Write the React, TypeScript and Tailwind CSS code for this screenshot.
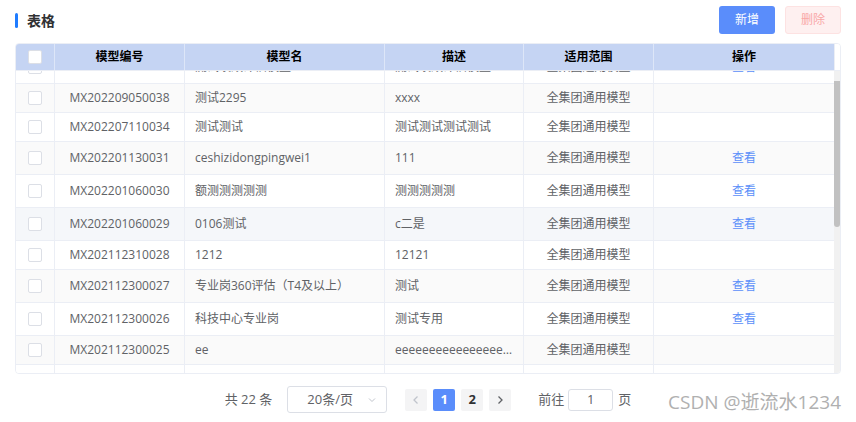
import React from 'react';

type Row = {
  code: string;
  name: string;
  desc: string;
  scope: string;
  view: boolean;
  bg: string;
};

const rows: Row[] = [
  { code: 'MX202212130039', name: '测试绩效评估模型', desc: '测试绩效评估模型', scope: '全集团通用模型', view: true, bg: 'bg-white' },
  { code: 'MX202209050038', name: '测试2295', desc: 'xxxx', scope: '全集团通用模型', view: false, bg: 'bg-[#fafafa]' },
  { code: 'MX202207110034', name: '测试测试', desc: '测试测试测试测试', scope: '全集团通用模型', view: false, bg: 'bg-white' },
  { code: 'MX202201130031', name: 'ceshizidongpingwei1', desc: '111', scope: '全集团通用模型', view: true, bg: 'bg-[#fafafa]' },
  { code: 'MX202201060030', name: '额测测测测测', desc: '测测测测测', scope: '全集团通用模型', view: true, bg: 'bg-white' },
  { code: 'MX202201060029', name: '0106测试', desc: 'c二是', scope: '全集团通用模型', view: true, bg: 'bg-[#f5f7fa]' },
  { code: 'MX202112310028', name: '1212', desc: '12121', scope: '全集团通用模型', view: false, bg: 'bg-white' },
  { code: 'MX202112300027', name: '专业岗360评估（T4及以上）', desc: '测试', scope: '全集团通用模型', view: true, bg: 'bg-[#fafafa]' },
  { code: 'MX202112300026', name: '科技中心专业岗', desc: '测试专用', scope: '全集团通用模型', view: true, bg: 'bg-white' },
  { code: 'MX202112300025', name: 'ee', desc: 'eeeeeeeeeeeeeeeeeeeeeeee', scope: '全集团通用模型', view: false, bg: 'bg-[#fafafa]' },
];

const cols = 'grid grid-cols-[39px_130px_200px_139px_130px_180px]';
const font = { fontFamily: '"Open Sans", "Noto Sans CJK SC", sans-serif' };

function Checkbox() {
  return <span className="block w-[14px] h-[14px] rounded-[2px] border border-[#dcdfe6] bg-white" />;
}

function Cell({ children, align = 'center', last = false }: { children?: React.ReactNode; align?: 'center' | 'left'; last?: boolean }) {
  return (
    <div
      className={`flex items-center overflow-hidden px-[10px] ${align === 'center' ? 'justify-center' : 'justify-start'} ${last ? '' : 'border-r border-[#ebeef5]'}`}
    >
      {children}
    </div>
  );
}

export default function App() {
  return (
    <div className="relative w-[856px] h-[422px] bg-white overflow-hidden text-[12px] text-[#606266]" style={font}>
      {/* toolbar */}
      <div className="flex items-center justify-between pl-[15px] pr-[15px] pt-[6px]">
        <div className="flex items-center gap-[9px]">
          <span className="block w-[3px] h-[15px] rounded-full bg-[#1f7cff]" />
          <span className="text-[14px] font-bold text-[#303133]">表格</span>
        </div>
        <div className="flex items-center gap-[10px]">
          <button className="w-[56px] h-[28px] rounded-[3px] bg-[#5a8dfb] text-white text-[12px]">新增</button>
          <button className="w-[56px] h-[28px] rounded-[3px] bg-[#fef0f0] border border-[#fde2e2] text-[#f9a7a7] text-[12px]">删除</button>
        </div>
      </div>

      {/* table */}
      <div className="mx-[15px] mt-[9px] border border-[#ebeef5] rounded-[4px] overflow-hidden">
        <div className="flex h-[27px] border-b border-[#ebeef5]">
          <div className={`${cols} bg-[#c5d4f3] text-black font-bold`}>
            <div className="flex items-center justify-center border-r border-[#dde6f8]"><Checkbox /></div>
            {['模型编号', '模型名', '描述', '适用范围', '操作'].map((h, i) => (
              <div key={h} className={`flex items-center justify-center ${i < 4 ? 'border-r border-[#dde6f8]' : ''}`}>{h}</div>
            ))}
          </div>
          <div className="flex-1 bg-white border-l border-[#ebeef5]" />
        </div>
        <div className="flex h-[302px]">
          <div className="overflow-hidden">
            <div className="-mt-[20px]">
              {rows.map((r) => (
                <div key={r.code} className={`${cols} ${r.bg} border-b border-[#ebeef5] ${r.view ? 'h-[33px]' : 'h-[29px]'}`}>
                  <Cell><Checkbox /></Cell>
                  <Cell>{r.code}</Cell>
                  <Cell align="left"><span className="whitespace-nowrap">{r.name}</span></Cell>
                  <Cell align="left"><span className="block truncate">{r.desc}</span></Cell>
                  <Cell>{r.scope}</Cell>
                  <Cell last>{r.view && <span className="text-[#5b8ff9]">查看</span>}</Cell>
                </div>
              ))}
              {/* next row, scrolled below the fold */}
              <div className={`${cols} bg-white h-[29px]`}>
                <Cell />
                <Cell />
                <Cell />
                <Cell />
                <Cell />
                <Cell last />
              </div>
            </div>
          </div>
          <div className="flex-1 bg-[#f1f1f1] pt-[10px]">
            <div className="h-[146px] rounded-b-[3px] bg-[#c1c1c1]" />
          </div>
        </div>
      </div>

      {/* pagination */}
      <div className="flex items-center justify-center mt-[12px] h-[27px] text-[13px]">
        <span className="mr-[15px]">共 22 条</span>
        <div className="flex items-center justify-between w-[100px] h-[27px] pl-[19px] pr-[9px] border border-[#dcdfe6] rounded-[3px] mr-[18px]">
          <span>20条/页</span>
          <svg width="10" height="10" viewBox="0 0 10 10" fill="none" stroke="#c0c4cc" strokeWidth="1">
            <path d="M2 3.5l3 3 3-3" />
          </svg>
        </div>
        <div className="flex items-center gap-[6px] mr-[27px]">
          <span className="flex items-center justify-center w-[22px] h-[22px] rounded-[2px] bg-[#f4f4f5]">
            <svg width="10" height="10" viewBox="0 0 10 10" fill="none" stroke="#c0c4cc" strokeWidth="1.3">
              <path d="M6.5 1.5L3 5l3.5 3.5" />
            </svg>
          </span>
          <span className="flex items-center justify-center w-[22px] h-[22px] rounded-[2px] bg-[#5a8dfb] text-white font-bold">1</span>
          <span className="flex items-center justify-center w-[22px] h-[22px] rounded-[2px] bg-[#f4f4f5] text-[#303133] font-bold">2</span>
          <span className="flex items-center justify-center w-[22px] h-[22px] rounded-[2px] bg-[#f4f4f5]">
            <svg width="10" height="10" viewBox="0 0 10 10" fill="none" stroke="#606266" strokeWidth="1.3">
              <path d="M3.5 1.5L7 5 3.5 8.5" />
            </svg>
          </span>
        </div>
        <span className="mr-[4px]">前往</span>
        <span className="flex items-center justify-center w-[45px] h-[22px] border border-[#dcdfe6] rounded-[3px] mr-[5px]">1</span>
        <span>页</span>
      </div>

      {/* watermark */}
      <div className="absolute right-[15px] top-[388px] text-[19px] text-[#b0b0b0]" style={font}>CSDN @逝流水1234</div>
    </div>
  );
}
